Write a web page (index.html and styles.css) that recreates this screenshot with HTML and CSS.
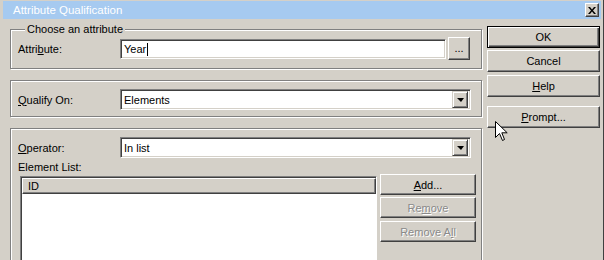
FILE: index.html
```html
<!DOCTYPE html>
<html>
<head>
<meta charset="utf-8">
<link rel="stylesheet" href="styles.css">
</head>
<body>
<div class="window">
  <div class="titlebar">
    <span class="title">Attribute Qualification</span>
    <span class="close"><svg width="8" height="7" viewBox="0 0 8 7"><path d="M0 0h2l2 2.5L6 0h2L5 3.5 8 7H6L4 4.5 2 7H0l3-3.5z" fill="#000"/></svg></span>
  </div>
  <div class="body">
    <div class="main">
      <fieldset class="group g1">
        <legend>Choose an attribute</legend>
        <div class="row">
          <span class="lbl">Attri<u>b</u>ute:</span>
          <div class="edit">Year<span class="caret"></span></div>
          <div class="btn browse">...</div>
        </div>
      </fieldset>
      <fieldset class="group g2">
        <div class="row">
          <span class="lbl"><u>Q</u>ualify On:</span>
          <div class="combo"><span class="val">Elements</span><span class="drop"><span class="tri"></span></span></div>
        </div>
      </fieldset>
      <fieldset class="group g3">
        <div class="row">
          <span class="lbl"><u>O</u>perator:</span>
          <div class="combo"><span class="val">In list</span><span class="drop"><span class="tri"></span></span></div>
        </div>
        <div class="listlbl">Element List:</div>
        <div class="listrow">
          <div class="listbox">
            <div class="header">ID</div>
          </div>
          <div class="listbtns">
            <div class="btn lb"><u>A</u>dd...</div>
            <div class="btn lb disabled rm">Re<u>m</u>ove</div>
            <div class="btn lb disabled rma">Remove A<u>l</u>l</div>
          </div>
        </div>
      </fieldset>
    </div>
    <div class="side">
      <div class="btn sb default">OK</div>
      <div class="btn sb cancel">Cancel</div>
      <div class="btn sb help"><u>H</u>elp</div>
      <div class="btn sb prompt"><u>P</u>rompt...</div>
    </div>
  </div>
  <svg class="cursor" width="13" height="21" viewBox="0 0 13 21"><path d="M0.5 0.5V16.5L4.5 12.5L7.5 19.5L9.5 18.5L6.8 11.8H12.2Z" fill="#fff" stroke="#000" stroke-width="1"/></svg>
</div>
</body>
</html>
```
FILE: styles.css
```css
html, body {
  margin: 0;
  padding: 0;
  background: #d4d0c8;
}
body {
  font-family: "Liberation Sans", Arial, sans-serif;
  font-size: 11px;
  color: #000;
}
.window {
  position: relative;
  width: 604px;
  height: 260px;
  box-sizing: border-box;
  padding: 1px 2px 0 3px;
  border-right: 1px solid #404040;
  overflow: hidden;
  background: #d4d0c8;
}
.titlebar {
  height: 18px;
  background: #a6caf0;
  display: flex;
  align-items: center;
  justify-content: space-between;
}
.title {
  color: #fff;
  padding-left: 10px;
  font-size: 11.5px;
}
.close {
  width: 12px;
  height: 12px;
  margin-right: 2px;
  background: #d4d0c8;
  border: 1px solid;
  border-color: #fff #404040 #404040 #fff;
  box-shadow: inset -1px -1px #808080;
  display: flex;
  align-items: center;
  justify-content: center;
}
.body {
  display: flex;
  padding-left: 7px;
}
.main {
  width: 472px;
}
.group {
  margin: 11px 0 0 0;
  padding: 8px 5px 6px 7px;
  border: 1px solid #808080;
  box-shadow: inset 1px 1px #fff, 1px 1px #fff;
  min-width: 0;
}
.group legend {
  padding: 0 2px;
  margin-left: 7px;
  line-height: 13px;
  background: #d4d0c8;
}
.g1 {
  margin-top: 4px;
  padding-top: 1px;
  padding-bottom: 8px;
}
.g3 {
  height: 140px;
  box-sizing: border-box;
}
.row {
  display: flex;
  align-items: center;
}
.lbl {
  width: 102px;
  flex: none;
}
.edit {
  width: 326px;
  height: 20px;
  box-sizing: border-box;
  background: #fff;
  border: 1px solid;
  border-color: #808080 #fff #fff #808080;
  box-shadow: inset 1px 1px #404040, inset -1px -1px #d4d0c8;
  padding: 3px 0 0 3px;
  display: flex;
  align-items: flex-start;
}
.caret {
  width: 1px;
  height: 13px;
  background: #000;
  margin-left: 1px;
}
.btn {
  box-sizing: border-box;
  background: #d4d0c8;
  border: 1px solid;
  border-color: #fff #404040 #404040 #fff;
  box-shadow: inset -1px -1px #808080;
  display: flex;
  align-items: center;
  justify-content: center;
}
.browse {
  width: 22px;
  height: 23px;
  margin-left: 2px;
  padding-bottom: 2px;
}
.combo {
  width: 351px;
  height: 21px;
  box-sizing: border-box;
  background: #fff;
  border: 1px solid;
  border-color: #808080 #fff #fff #808080;
  box-shadow: inset 1px 1px #404040, inset -1px -1px #d4d0c8;
  display: flex;
  align-items: center;
  padding: 2px 2px 2px 3px;
}
.val {
  flex: 1;
}
.drop {
  width: 16px;
  height: 17px;
  box-sizing: border-box;
  background: #d4d0c8;
  border: 1px solid;
  border-color: #d4d0c8 #404040 #404040 #d4d0c8;
  box-shadow: inset 1px 1px #fff, inset -1px -1px #808080;
  display: flex;
  align-items: center;
  justify-content: center;
}
.tri {
  width: 0;
  height: 0;
  border-left: 4px solid transparent;
  border-right: 3px solid transparent;
  border-top: 4px solid #000;
}
.listlbl {
  margin-top: 3px;
  line-height: 13px;
  padding-left: 0;
}
.listrow {
  display: flex;
  align-items: flex-start;
}
.listbox {
  width: 357px;
  height: 100px;
  margin-left: 2px;
  margin-top: 2px;
  box-sizing: border-box;
  background: #fff;
  border: 1px solid;
  border-color: #808080 #fff #fff #808080;
  box-shadow: inset 1px 1px #404040;
  padding: 1px 0 0 1px;
}
.header {
  height: 16px;
  box-sizing: border-box;
  background: #d4d0c8;
  border: 1px solid;
  border-color: #fff #404040 #404040 #fff;
  box-shadow: inset -1px -1px #808080;
  padding-left: 5px;
  line-height: 14px;
}
.listbtns {
  display: flex;
  flex-direction: column;
  margin-left: 3px;
}
.lb {
  width: 96px;
  height: 21px;
}
.rm {
  margin-top: 2px;
}
.rma {
  margin-top: 3px;
}
.disabled {
  color: #8a8a8a;
  text-shadow: 1px 1px #fff;
}
.side {
  display: flex;
  flex-direction: column;
  margin-left: 5px;
  margin-top: 7px;
  width: 113px;
}
.sb {
  height: 22px;
}
.default {
  border: 1px solid #000;
  box-shadow: inset 1px 1px #fff, inset -1px -1px #404040, inset -2px -2px #808080;
}
.cancel {
  margin-top: 2px;
}
.help {
  margin-top: 3px;
}
.prompt {
  margin-top: 9px;
}
.cursor {
  position: absolute;
  left: 495px;
  top: 121px;
}
```
